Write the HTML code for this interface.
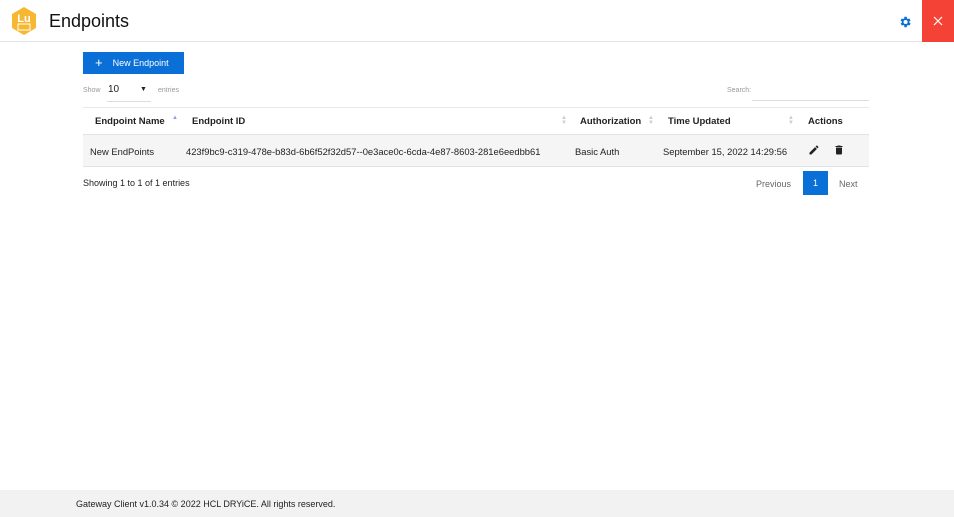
<!DOCTYPE html>
<html><head><style>
*{margin:0;padding:0;box-sizing:border-box}
body{width:954px;height:517px;background:#fff;font-family:"Liberation Sans",sans-serif;color:#222;position:relative;overflow:hidden}
.a{position:absolute;white-space:nowrap}
.th{font-weight:bold;font-size:9.5px;top:116px}
.td{font-size:9.4px;top:146px}
.sort{position:absolute;top:116px;font-size:6px;color:#ccc;line-height:5px}
</style></head><body>
<div class="a" style="left:0;top:41px;width:954px;height:1px;background:#e3e3e3"></div>
<svg class="a" style="left:9px;top:6px" width="30" height="30" viewBox="0 0 30 30"><polygon points="15,1 27,8 27,22 15,29 3,22 3,8" fill="#f7b731"/><text x="15" y="16" font-size="11" font-weight="bold" fill="#fff" text-anchor="middle" font-family="Liberation Sans">Lu</text><rect x="9" y="18" width="12" height="6" fill="none" stroke="#fff" stroke-width="1"/></svg>
<div class="a" style="left:49px;top:11px;font-size:18px;color:#111">Endpoints</div>
<svg class="a" style="left:898px;top:15px" width="14" height="14" viewBox="0 0 24 24"><path fill="#0a6fd6" d="M19.4 13a7.5 7.5 0 0 0 0-2l2.1-1.6-2-3.5-2.5 1a7 7 0 0 0-1.7-1L15 3h-4l-.4 2.9a7 7 0 0 0-1.7 1l-2.5-1-2 3.5L6.6 11a7.5 7.5 0 0 0 0 2l-2.1 1.6 2 3.5 2.5-1a7 7 0 0 0 1.7 1L11 21h4l.4-2.9a7 7 0 0 0 1.7-1l2.5 1 2-3.5zM13 15.5a3.5 3.5 0 1 1 0-7 3.5 3.5 0 0 1 0 7z"/></svg>
<div class="a" style="left:922px;top:0;width:32px;height:42px;background:#f44336"></div>
<svg class="a" style="left:933px;top:16px" width="10" height="10"><path d="M1 1L9 9M9 1L1 9" stroke="#fff" stroke-width="1.2"/></svg>
<div class="a" style="left:83px;top:52px;width:101px;height:22px;background:#0a6fd6;color:#fff;font-size:9px;line-height:22px;padding-left:12px"><span style="font-size:13px;vertical-align:-1px">+</span>&nbsp;&nbsp;&nbsp;&nbsp;New Endpoint</div>
<div class="a" style="left:83px;top:87px;font-size:7px;color:#999">Show</div>
<div class="a" style="left:108px;top:84px;font-size:10px">10</div>
<div class="a" style="left:140px;top:86px;font-size:7px">▼</div>
<div class="a" style="left:107px;top:101px;width:44px;height:1px;background:#ddd"></div>
<div class="a" style="left:158px;top:87px;font-size:7px;color:#999">entries</div>
<div class="a" style="left:727px;top:87px;font-size:7px;color:#999">Search:</div>
<div class="a" style="left:752px;top:100px;width:117px;height:1px;background:#ddd"></div>
<div class="a" style="left:83px;top:107px;width:786px;height:1px;background:#e8e8e8"></div>
<div class="a" style="left:83px;top:134px;width:786px;height:33px;background:#f5f5f5;border-top:1px solid #e3e3e3;border-bottom:1px solid #e3e3e3"></div>
<div class="a th" style="left:95px">Endpoint Name</div><div class="sort" style="left:172px;color:#8aa0e8">▲</div>
<div class="a th" style="left:192px">Endpoint ID</div><div class="sort" style="left:561px">▲<br>▼</div>
<div class="a th" style="left:580px">Authorization</div><div class="sort" style="left:648px">▲<br>▼</div>
<div class="a th" style="left:668px">Time Updated</div><div class="sort" style="left:788px">▲<br>▼</div>
<div class="a th" style="left:808px">Actions</div>
<div class="a td" style="left:90px">New EndPoints</div>
<div class="a td" style="left:186px">423f9bc9-c319-478e-b83d-6b6f52f32d57--0e3ace0c-6cda-4e87-8603-281e6eedbb61</div>
<div class="a td" style="left:575px">Basic Auth</div>
<div class="a td" style="left:663px">September 15, 2022 14:29:56</div>
<svg class="a" style="left:808px;top:144px" width="12" height="12" viewBox="0 0 24 24"><path fill="#222" d="M3 17.25V21h3.75L17.8 9.94l-3.75-3.75zM20.7 7.04a1 1 0 0 0 0-1.41l-2.34-2.34a1 1 0 0 0-1.41 0l-1.83 1.83 3.75 3.75z"/></svg>
<svg class="a" style="left:833px;top:144px" width="12" height="12" viewBox="0 0 24 24"><path fill="#222" d="M6 19a2 2 0 0 0 2 2h8a2 2 0 0 0 2-2V7H6zM19 4h-3.5l-1-1h-5l-1 1H5v2h14z"/></svg>
<div class="a" style="left:83px;top:178px;font-size:9px">Showing 1 to 1 of 1 entries</div>
<div class="a" style="left:756px;top:179px;font-size:9px;color:#666">Previous</div>
<div class="a" style="left:803px;top:171px;width:25px;height:24px;background:#0a6fd6;color:#fff;font-size:9px;text-align:center;line-height:24px">1</div>
<div class="a" style="left:839px;top:179px;font-size:9px;color:#666">Next</div>
<div class="a" style="left:0;top:490px;width:954px;height:27px;background:#f2f2f2"></div>
<div class="a" style="left:76px;top:499px;font-size:9px;color:#222">Gateway Client v1.0.34 © 2022 HCL DRYiCE. All rights reserved.</div>
</body></html>
